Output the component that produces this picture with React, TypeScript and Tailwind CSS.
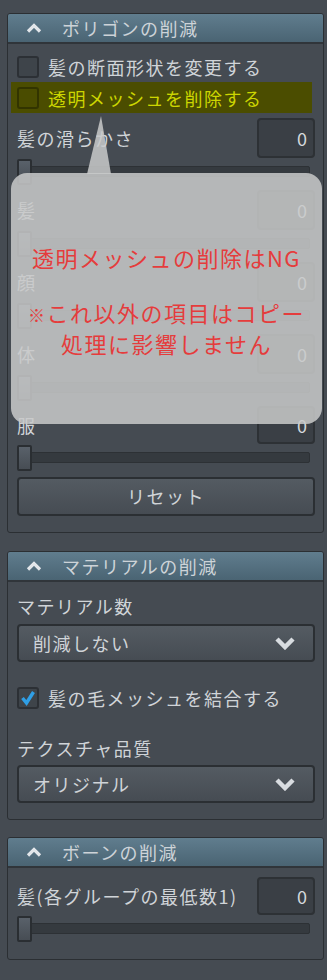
import React from 'react';

const font = { fontFamily: '"Noto Sans CJK JP", "Noto Sans", sans-serif' };

function Header({ title }: { title: string }) {
  return (
    <div className="flex h-[30px] items-center border-b-2 border-[#30353a] bg-gradient-to-b from-[#607d8e] to-[#4a6473] pl-[18px]">
      <svg width="16" height="10" viewBox="0 0 16 10" className="shrink-0">
        <polyline points="2,8.5 8,2.5 14,8.5" fill="none" stroke="#e2e6ea" strokeWidth="3.2" />
      </svg>
      <span className="ml-[20px] text-[18px] leading-[26px] tracking-[1.5px] text-[#cdd3d8]">{title}</span>
    </div>
  );
}

function Checkbox({ checked = false, dim = false }: { checked?: boolean; dim?: boolean }) {
  return (
    <div
      className={`flex h-[22px] w-[22px] shrink-0 items-center justify-center rounded-[3px] border-2 ${
        dim ? 'border-[#323400] bg-[#4a4c00]' : 'border-[#2c3035] bg-[#3e444a]'
      }`}
    >
      {checked && (
        <svg width="16" height="16" viewBox="0 0 16 16">
          <polyline points="2.5,8 6.5,13 13.5,2" fill="none" stroke="#2f9fe6" strokeWidth="3.4" />
        </svg>
      )}
    </div>
  );
}

function NumBox({ h = 40 }: { h?: number }) {
  return (
    <div
      className={`flex w-[58px] items-center justify-end rounded-[4px] border-2 border-[#2d3135] bg-[#3a3f45] pr-[6px] text-[18px] text-[#d4d8dc] ${
        h === 40 ? 'h-[40px]' : 'h-[38px]'
      }`}
    >
      0
    </div>
  );
}

function Slider() {
  return (
    <div className="h-[32px] pt-[8px]">
      <div className="relative h-[11px] w-[293px] rounded-[2px] border border-[#2d3135] bg-[#353a3f]">
        <div className="absolute left-[-1px] top-[-8px] h-[26px] w-[15px] rounded-[2px] border-2 border-[#2a2e32] bg-gradient-to-b from-[#59616a] to-[#474d54]" />
      </div>
    </div>
  );
}

function ValueRow({ label, h = 40 }: { label: string; h?: number }) {
  return (
    <div>
      <div className="flex items-center justify-between">
        <span className="text-[18px] leading-[26px] tracking-[1.5px] text-[#d0d4d8]">{label}</span>
        <NumBox h={h} />
      </div>
      <Slider />
    </div>
  );
}

function Dropdown({ value }: { value: string }) {
  return (
    <div className="flex h-[38px] items-center justify-between rounded-[4px] border-2 border-[#2b2f33] bg-gradient-to-b from-[#545b62] to-[#464c53] pl-[14px] pr-[17px]">
      <span className="text-[18px] leading-[26px] tracking-[1.5px] text-[#d0d4d8]">{value}</span>
      <svg width="22" height="14" viewBox="0 0 22 14">
        <polyline points="3,3 11,11 19,3" fill="none" stroke="#d8dce0" strokeWidth="4.5" />
      </svg>
    </div>
  );
}

export default function App() {
  return (
    <div className="relative min-h-[980px] bg-[#454b52] pl-[7px] pr-[3px] pt-[13px]" style={font}>
      {/* ポリゴンの削減 */}
      <div className="overflow-hidden rounded-[3px] border border-[#2b2f33]">
        <Header title="ポリゴンの削減" />
        <div className="pb-[16px] pl-[9px] pr-[8px] pt-[12px]">
          <div className="flex h-[22px] items-center gap-[9px]">
            <Checkbox />
            <span className="text-[18px] leading-[26px] tracking-[1.5px] text-[#d0d4d8]">髪の断面形状を変更する</span>
          </div>
          <div className="ml-[-6px] mt-[4px] flex h-[31px] w-[301px] items-center gap-[9px] bg-[#4b4d00] pl-[6px]">
            <Checkbox dim />
            <span className="text-[18px] leading-[26px] tracking-[1.5px] text-[#cdd600]">透明メッシュを削除する</span>
          </div>
          <div className="mt-[5px]">
            <ValueRow label="髪の滑らかさ" />
            <ValueRow label="髪" />
            <ValueRow label="顔" />
            <ValueRow label="体" />
            <ValueRow label="服" h={38} />
          </div>
          <div className="mt-[1px] flex h-[39px] items-center justify-center rounded-[4px] border-2 border-[#2b2f33] bg-gradient-to-b from-[#545b62] to-[#464c53] text-[18px] tracking-[1.5px] text-[#d0d4d8]">
            リセット
          </div>
        </div>
      </div>

      {/* マテリアルの削減 */}
      <div className="mt-[18px] overflow-hidden rounded-[3px] border border-[#2b2f33]">
        <Header title="マテリアルの削減" />
        <div className="pb-[16px] pl-[9px] pr-[8px] pt-[11px]">
          <div className="text-[18px] leading-[26px] tracking-[1.5px] text-[#d0d4d8]">マテリアル数</div>
          <div className="mt-[5px]">
            <Dropdown value="削減しない" />
          </div>
          <div className="mt-[24px] flex h-[23px] items-center gap-[9px]">
            <Checkbox checked />
            <span className="text-[18px] leading-[26px] tracking-[1.5px] text-[#d0d4d8]">髪の毛メッシュを結合する</span>
          </div>
          <div className="mt-[26px] text-[18px] leading-[26px] tracking-[1.5px] text-[#d0d4d8]">テクスチャ品質</div>
          <div className="mt-[4px]">
            <Dropdown value="オリジナル" />
          </div>
        </div>
      </div>

      {/* ボーンの削減 */}
      <div className="mt-[17px] overflow-hidden rounded-[3px] border border-[#2b2f33]">
        <Header title="ボーンの削減" />
        <div className="pb-[12px] pl-[9px] pr-[8px] pt-[9px]">
          <ValueRow label="髪(各グループの最低数1)" h={38} />
        </div>
      </div>

      {/* Tooltip overlay */}
      <svg className="absolute left-[85px] top-[116px]" width="28" height="58" viewBox="0 0 28 58">
        <polygon points="16,0 2,58 26,58" fill="rgba(200,201,202,0.86)" />
      </svg>
      <div className="absolute left-[11px] top-[173px] h-[251px] w-[311px] rounded-[16px] bg-[rgba(200,201,202,0.86)] pt-[69px] text-center text-[#e53c3c]">
        <div className="text-[22px] leading-[30px] tracking-[1.5px]">透明メッシュの削除はNG</div>
        <div className="mt-[26px] text-[22px] leading-[28px] tracking-[1.5px]">
          <span className="text-[17px]">※</span>これ以外の項目はコピー
        </div>
        <div className="text-[22px] leading-[28px] tracking-[1.5px]">処理に影響しません</div>
      </div>
    </div>
  );
}
